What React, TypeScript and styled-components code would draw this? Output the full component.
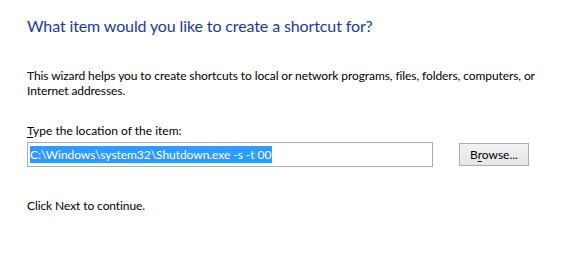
import React from 'react';
import styled, {createGlobalStyle} from 'styled-components';

const GlobalStyle = createGlobalStyle`
  html, body {
    margin: 0;
    padding: 0;
    background: #ffffff;
  }
  body {
    font-family: Lato, 'Noto Sans', sans-serif;
  }
`;

const Page = styled.div`
  width: 562px;
  height: 276px;
  box-sizing: border-box;
  padding: 15px 27px 0 27px;
  display: flex;
  flex-direction: column;
  color: #000;
`;

const Heading = styled.h1`
  margin: 0;
  font-size: 16px;
  font-weight: 400;
  line-height: 22px;
  letter-spacing: -0.12px;
  color: #1c3a94;
`;

const Paragraph = styled.p<{top: number}>`
  margin: ${props => props.top}px 0 0 0;
  font-size: 12px;
  line-height: 15px;
  letter-spacing: -0.09px;
`;

const Label = styled.label`
  display: block;
  margin-top: 25px;
  font-size: 12px;
  line-height: 15px;
`;

const AccessKey = styled.span`
  text-decoration: underline;
  text-underline-offset: 2px;
`;

const Row = styled.div`
  display: flex;
  align-items: center;
  margin-top: 4px;
  gap: 26px;
`;

const Field = styled.div`
  width: 406px;
  height: 25px;
  box-sizing: border-box;
  border: 1px solid #acacac;
  display: flex;
  align-items: center;
  padding-left: 2px;
`;

const Selected = styled.span`
  background: #3399ff;
  color: #fff;
  font-size: 12px;
  line-height: 17px;
  letter-spacing: -0.05px;
  padding-right: 1px;
`;

const Button = styled.button`
  width: 70px;
  height: 23px;
  box-sizing: border-box;
  border: 1px solid #adadad;
  background: linear-gradient(#f2f2f2, #e6e6e6);
  font-family: inherit;
  font-size: 12px;
  color: #000;
  padding: 0;
`;

const App = () => {
  return (
    <>
      <GlobalStyle />
      <Page>
        <Heading>What item would you like to create a shortcut for?</Heading>
        <Paragraph top={31}>
          This wizard helps you to create shortcuts to local or network programs, files, folders, computers, or
          Internet addresses.
        </Paragraph>
        <Label>
          <AccessKey>T</AccessKey>ype the location of the item:
        </Label>
        <Row>
          <Field>
            <Selected>C:\Windows\system32\Shutdown.exe -s -t 00</Selected>
          </Field>
          <Button>
            B<AccessKey>r</AccessKey>owse...
          </Button>
        </Row>
        <Paragraph top={31}>Click Next to continue.</Paragraph>
      </Page>
    </>
  );
};

export default App;
